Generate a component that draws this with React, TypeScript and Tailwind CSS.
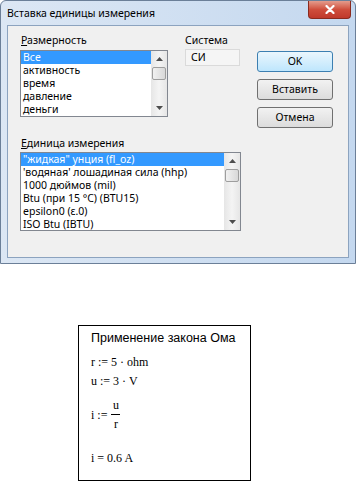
import React from "react";

const uiFont = { fontFamily: '"Noto Sans", "Open Sans", sans-serif' };

const dimensions = ["Все", "активность", "время", "давление", "деньги"];
const units = [
  "\"жидкая\" унция (fl_oz)",
  "'водяная' лошадиная сила (hhp)",
  "1000 дюймов (mil)",
  "Btu (при 15 °C) (BTU15)",
  "epsilon0 (ε.0)",
  "ISO Btu (IBTU)",
];

function Arrow({ down }: { down?: boolean }) {
  return (
    <div className="h-[16px] flex items-center justify-center">
      <svg width="7" height="4" viewBox="0 0 7 4">
        {down ? (
          <path d="M0 0 H7 L3.5 4 Z" fill="#4d4d4d" />
        ) : (
          <path d="M0 4 H7 L3.5 0 Z" fill="#4d4d4d" />
        )}
      </svg>
    </div>
  );
}

function ScrollBar() {
  return (
    <div className="w-[16px] h-full flex flex-col bg-gradient-to-r from-[#e6e6e6] via-[#f4f4f4] to-[#e6e6e6]">
      <Arrow />
      <div className="flex-1 px-[1px]">
        <div className="h-[13px] rounded-[2px] border border-[#9e9e9e] bg-gradient-to-r from-[#f1f1f1] to-[#d8d8d8]" />
      </div>
      <Arrow down />
    </div>
  );
}

function ListBox({
  items,
  width,
  height,
}: {
  items: string[];
  width: string;
  height: string;
}) {
  return (
    <div className={`${width} ${height} flex border border-[#828790] bg-white overflow-hidden`}>
      <div className="flex-1 flex flex-col overflow-hidden">
        {items.map((it, i) => (
          <div
            key={it}
            className={`h-[13px] shrink-0 leading-[13px] pl-[2px] whitespace-nowrap ${
              i === 0 ? "bg-[#3399ff] text-white" : "text-black"
            }`}
          >
            {it}
          </div>
        ))}
      </div>
      <ScrollBar />
    </div>
  );
}

function Button({ label, primary }: { label: string; primary?: boolean }) {
  return (
    <div
      className={`w-[76px] h-[21px] rounded-[3px] border flex items-center justify-center text-black ${
        primary
          ? "border-[#3c7fb1] bg-gradient-to-b from-[#eaf6fd] to-[#bee6fd]"
          : "border-[#707070] bg-gradient-to-b from-[#f2f2f2] to-[#dcdcdc]"
      }`}
    >
      {label}
    </div>
  );
}

export default function App() {
  return (
    <div className="w-[357px] h-[482px] bg-white overflow-hidden" style={uiFont}>
      {/* dialog window */}
      <div className="w-[356px] h-[264px] flex flex-col border border-[#6b7f98] rounded-t-[6px] bg-gradient-to-r from-[#dce7f4] to-[#c4d8ef] text-[10.5px]">
        <div className="h-[24px] flex justify-between">
          <div className="pl-[6px] pt-[5px] leading-[15px] text-black">
            Вставка единицы измерения
          </div>
          <div className="mr-[4px] w-[43px] h-[18px] rounded-b-[4px] border border-t-0 border-[#8a2a1e] bg-gradient-to-b from-[#e39b8c] via-[#cf4e3c] to-[#c0392b] flex items-center justify-center">
            <svg width="10" height="9" viewBox="0 0 10 9">
              <path d="M1.5 1 L8.5 8 M8.5 1 L1.5 8" stroke="white" strokeWidth="2.2" strokeLinecap="round" />
            </svg>
          </div>
        </div>

        <div className="flex-1 mx-[6px] mb-[5px] border border-[#8ca3bf] bg-[#f0f0f0] flex pl-[12px]">
          <div className="flex flex-col">
            <div className="flex gap-[17px]">
              <div className="flex flex-col pt-[7px]">
                <div className="h-[17px] leading-[15px] pl-[1px]">
                  <span className="underline">Р</span>азмерность
                </div>
                <ListBox items={dimensions} width="w-[148px]" height="h-[67px]" />
              </div>
              <div className="flex flex-col pt-[7px]">
                <div className="h-[16px] leading-[15px]">Система</div>
                <div className="w-[55px] h-[17px] border border-[#dadada] bg-[#f5f5f5] pl-[5px] leading-[15px]">
                  СИ
                </div>
              </div>
            </div>
            <div className="mt-[19px] h-[16px] leading-[15px] pl-[1px]">
              <span className="underline">Е</span>диница измерения
            </div>
            <ListBox items={units} width="w-[221px]" height="h-[79px]" />
          </div>
          <div className="ml-[16px] pt-[25px] flex flex-col gap-[7px]">
            <Button label="OK" primary />
            <Button label="Вставить" />
            <Button label="Отмена" />
          </div>
        </div>
      </div>

      {/* worksheet */}
      <div className="ml-[78px] mt-[61px] w-[173px] h-[156px] border border-black flex flex-col pl-[12px] text-black">
        <div
          className="mt-[5px] text-[12.5px] leading-[14px]"
          style={{ fontFamily: '"Liberation Sans", Arial, sans-serif' }}
        >
          Применение закона Ома
        </div>
        <div
          className="flex flex-col text-[12px]"
          style={{ fontFamily: '"Liberation Serif", "Times New Roman", serif' }}
        >
          <div className="mt-[10px] leading-[14px]">r := 5 · ohm</div>
          <div className="mt-[5px] leading-[14px]">u := 3 · V</div>
          <div className="mt-[11px] flex items-center gap-[4px]">
            <span className="leading-[14px]">i :=</span>
            <div className="flex flex-col items-center">
              <span className="leading-[12px]">u</span>
              <div className="w-[9px] h-[1px] bg-black my-[3px]" />
              <span className="leading-[12px]">r</span>
            </div>
          </div>
          <div className="mt-[21px] leading-[14px]">i = 0.6 A</div>
        </div>
      </div>
    </div>
  );
}
